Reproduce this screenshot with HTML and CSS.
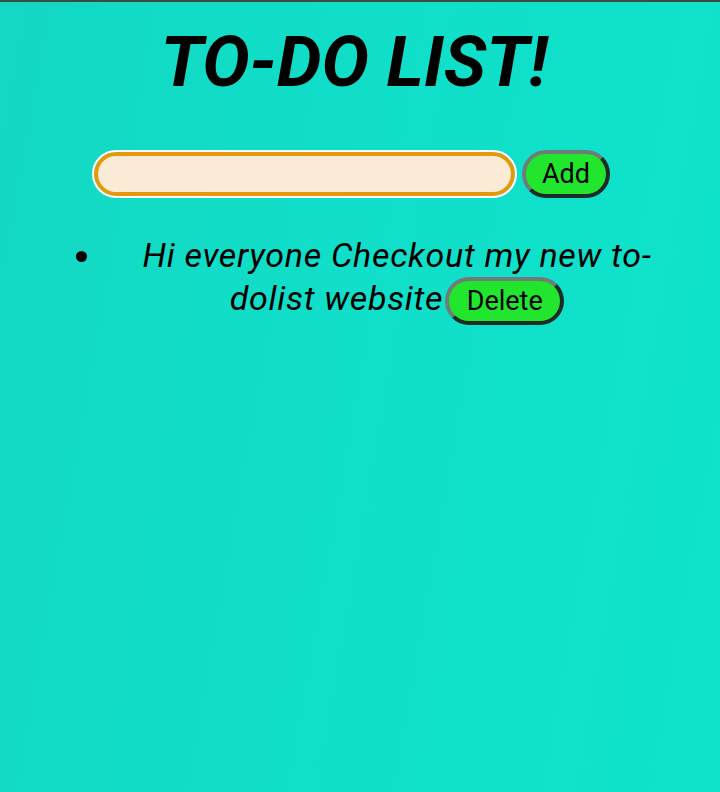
FILE: index.html
```html
<!DOCTYPE html>
<html>
<head>
<meta charset="utf-8">
<link rel="stylesheet" href="styles.css">
</head>
<body>
<div class="topbar"></div>
<h1 class="title">TO-DO LIST!</h1>
<div class="form">
  <input class="task-input" type="text">
  <button class="btn add">Add</button>
</div>
<ul class="list">
  <li class="item">Hi everyone Checkout my new to-dolist website<button class="btn del">Delete</button></li>
</ul>
</body>
</html>
```
FILE: styles.css
```css
html, body {
  margin: 0;
  padding: 0;
  height: 100%;
}
body {
  background: linear-gradient(100deg, #13d8c3 0%, #10dfc9 50%, #0fe3cc 100%);
  font-family: Roboto, "Noto Sans", sans-serif;
  color: #000;
}
.topbar {
  height: 2px;
  background: #3c4a48;
}
.title {
  margin: 18px 0 0 0;
  text-align: center;
  font-size: 71px;
  font-weight: 700;
  font-style: italic;
  line-height: 84px;
  padding-right: 12px;
}
.form {
  display: flex;
  justify-content: center;
  align-items: center;
  gap: 5px;
  margin-top: 46px;
  padding-right: 18px;
}
.task-input {
  box-sizing: border-box;
  width: 421px;
  height: 44px;
  margin: 2px;
  border: 4px solid #e5990a;
  outline: 2px solid #ffffff;
  border-radius: 22px;
  background: #faebd7;
  padding: 0 16px;
  font-size: 24px;
}
.btn {
  box-sizing: border-box;
  height: 48px;
  border-width: 4px;
  border-style: solid;
  border-color: #6f7d79 #1d2b28 #1d2b28 #6f7d79;
  border-radius: 24px;
  background: #22e62e;
  font-family: Roboto, "Noto Sans", sans-serif;
  font-size: 27px;
  font-style: normal;
  line-height: normal;
  letter-spacing: 0;
  color: #000;
  padding: 0 8px;
}
.add {
  width: 88px;
}
.del {
  width: 119px;
  margin-left: 2px;
}
.list {
  margin: 36px 0 0 0;
  padding: 0 0 0 104px;
}
.item {
  padding: 0 53px 0 23px;
  text-align: center;
  font-style: italic;
  font-size: 34px;
  line-height: 43px;
  letter-spacing: 0.7px;
}
```
